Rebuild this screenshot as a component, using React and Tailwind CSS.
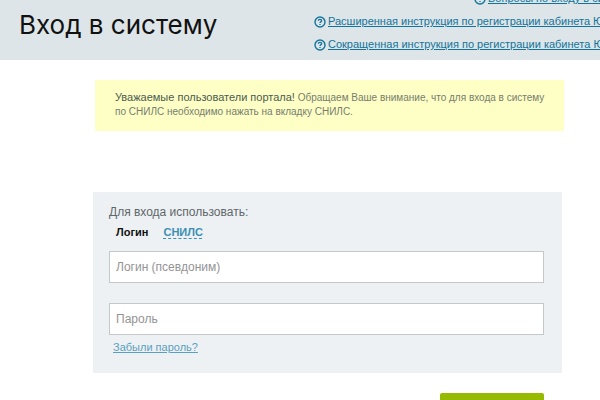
import React, { useState } from 'react';

const helpLinks = [
  { text: 'Вопросы по входу в систему', className: 'pl-[160px]' },
  { text: 'Расширенная инструкция по регистрации кабинета ЮЛ', className: '' },
  { text: 'Сокращенная инструкция по регистрации кабинета ЮЛ', className: '' },
];

const HelpIcon = () => (
  <svg width="12" height="12" viewBox="0 0 12 12" fill="none" stroke="currentColor" className="shrink-0">
    <circle cx="6" cy="6" r="5" strokeWidth="1.4" />
    <path d="M4.3 4.8C4.3 3.8 5 3.3 6 3.3s1.7.6 1.7 1.4C7.7 5.6 6 5.7 6 7" strokeWidth="1.3" />
    <path d="M6 7.9v1.2" strokeWidth="1.3" />
  </svg>
);

const Header = () => (
  <header className="flex items-start justify-between overflow-hidden bg-[#dde5e8] pb-1 pl-[19px]">
    <h1 className="whitespace-nowrap pt-[7px] font-['Inter',sans-serif] text-[26px] leading-9 text-[#111]">
      Вход в систему
    </h1>
    <nav className="-mt-[13px] w-[286px] shrink-0">
      {helpLinks.map((link) => (
        <a
          key={link.text}
          href="#"
          className={`flex h-[23px] items-center gap-0.5 whitespace-nowrap text-[11px] text-[#12749a] ${link.className}`}
        >
          <HelpIcon />
          <span className="underline">{link.text}</span>
        </a>
      ))}
    </nav>
  </header>
);

const App = () => {
  const [mode, setMode] = useState('login');

  return (
    <div className="h-screen overflow-hidden bg-white font-['Liberation_Sans',Arial,sans-serif]">
      <Header />

      <main className="pl-[93px] pr-[38px] pt-5">
        <p className="-mr-0.5 ml-0.5 bg-[#feffc4] pb-3 pl-5 pr-3 pt-[10px] text-[10px] leading-[14px] text-[#777d70]">
          <span className="text-[11px] text-[#4c5a52]">Уважаемые пользователи портала!</span> Обращаем Ваше внимание, что для входа в систему
          по СНИЛС необходимо нажать на вкладку СНИЛС.
        </p>

        <form onSubmit={(e) => e.preventDefault()} className="mt-[61px]">
          <div className="bg-[#edf1f3] pb-[18px] pl-4 pr-[18px] pt-3">
            <p className="text-xs leading-4 text-[#5f676b]">Для входа использовать:</p>

            <div className="mt-1 flex gap-[15px] pl-[7px] text-[11px] font-bold leading-[17px]">
              <button type="button" onClick={() => setMode('login')} className="text-[#111]">
                Логин
              </button>
              <button
                type="button"
                onClick={() => setMode('snils')}
                className="underline decoration-dashed underline-offset-2 text-[#3b8fb5]"
              >
                СНИЛС
              </button>
            </div>

            <input
              type="text"
              aria-label="Логин"
              placeholder={mode === 'login' ? 'Логин (псевдоним)' : 'СНИЛС'}
              className="mt-[10px] block h-8 w-full border border-[#c3c8cb] bg-white px-[6px] text-xs text-[#333] placeholder:text-[#949494]"
            />
            <input
              type="password"
              aria-label="Пароль"
              placeholder="Пароль"
              className="mt-5 block h-8 w-full border border-[#c3c8cb] bg-white px-[6px] text-xs text-[#333] placeholder:text-[#949494]"
            />
            <a href="#" className="ml-1 mt-1 block w-fit text-[11px] leading-4 text-[#5b9fc0] underline">
              Забыли пароль?
            </a>
          </div>

          <div className="mt-5 flex justify-end pr-[18px]">
            <button type="submit" aria-label="Войти" className="h-9 w-[104px] rounded-xs bg-[#96ba00]" />
          </div>
        </form>
      </main>
    </div>
  );
};

export default App;
